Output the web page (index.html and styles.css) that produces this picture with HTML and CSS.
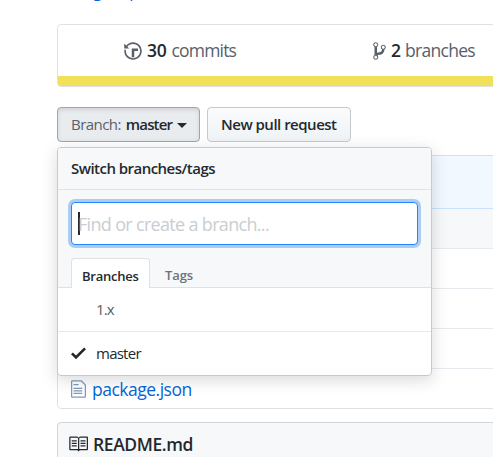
FILE: index.html
```html
<!DOCTYPE html>
<html lang="en">
<head>
<meta charset="utf-8">
<title>Repository</title>
<link rel="stylesheet" href="styles.css">
</head>
<body>
<div class="page">
  <div class="topics"><span>g</span><span>p</span></div>
  <div class="summary">
    <div class="stats">
      <div class="stat commits">
        <svg width="18" height="20" viewBox="0 0 14 16"><path fill-rule="evenodd" d="M8 13H6V6h5v2H8v5zM7 1C4.81 1 2.87 2.02 1.59 3.59L0 2v4h4L2.5 4.5C3.55 3.17 5.17 2.3 7 2.3c3.14 0 5.7 2.56 5.7 5.7s-2.56 5.7-5.7 5.7A5.71 5.71 0 0 1 1.3 8c0-.34.03-.67.09-1H.08C.03 7.33 0 7.66 0 8c0 3.86 3.14 7 7 7s7-3.14 7-7-3.14-7-7-7z"/></svg>
        <b>30</b><span>commits</span>
      </div>
      <div class="stat branches">
        <svg width="13" height="20" viewBox="0 0 10 16"><path fill-rule="evenodd" d="M10 5c0-1.11-.89-2-2-2a1.993 1.993 0 0 0-1 3.72v.3c-.02.52-.23.98-.63 1.38-.4.4-.86.61-1.38.63-.83.02-1.48.16-2 .45V4.72a1.993 1.993 0 0 0-1-3.72C.88 1 0 1.89 0 3a2 2 0 0 0 1 1.72v6.56c-.59.35-1 .99-1 1.72 0 1.11.89 2 2 2 1.11 0 2-.89 2-2 0-.53-.2-1-.53-1.36.09-.06.48-.41.59-.47.25-.11.56-.17.94-.17 1.05-.05 1.95-.45 2.75-1.25S8.95 7.77 9 6.73h-.02C9.59 6.37 10 5.73 10 5zM2 1.8c.66 0 1.2.55 1.2 1.2 0 .65-.55 1.2-1.2 1.2C1.35 4.2.8 3.65.8 3c0-.65.55-1.2 1.2-1.2zm0 12.41c-.66 0-1.2-.55-1.2-1.2 0-.65.55-1.2 1.2-1.2.65 0 1.2.55 1.2 1.2 0 .65-.55 1.2-1.2 1.2zm6-8c-.66 0-1.2-.55-1.2-1.2 0-.65.55-1.2 1.2-1.2.65 0 1.2.55 1.2 1.2 0 .65-.55 1.2-1.2 1.2z"/></svg>
        <b>2</b><span>branches</span>
      </div>
    </div>
    <div class="language"></div>
  </div>
  <div class="toolbar">
    <button class="btn selected"><span class="label">Branch:</span><span class="current">master</span><i class="caret"></i></button>
    <button class="btn pull"><span>New pull request</span></button>
    <div class="menu">
      <div class="menu-head"><span>Switch branches/tags</span></div>
      <div class="filter">
        <div class="field"><i class="cursor"></i><span>Find or create a branch...</span></div>
        <div class="tabs"><div class="tab active"><span>Branches</span></div><div class="tab"><span>Tags</span></div></div>
      </div>
      <div class="item"><span class="check"></span><span class="one">1.x</span></div>
      <div class="item chosen"><span class="check"><svg width="15" height="20" viewBox="0 0 12 16"><path d="M12 5l-8 8-4-4 1.500-1.500L4 10l6.500-6.500L12 5z"/></svg></span><span class="name">master</span></div>
    </div>
  </div>
  <div class="files">
    <div class="latest"></div>
    <div class="row shade"></div>
    <div class="row"></div>
    <div class="row"></div>
    <div class="row"></div>
    <div class="row file">
      <svg width="15" height="20" viewBox="0 0 12 16"><path fill-rule="evenodd" d="M6 5H2V4h4v1zM2 8h7V7H2v1zm0 2h7V9H2v1zm0 2h7v-1H2v1zm10-7.500V14c0 .55-.45 1-1 1H1c-.55 0-1-.45-1-1V2c0-.55.45-1 1-1h7.500L12 4.500zM11 5L8 2H1v12h10V5z"/></svg>
      <span>package.json</span>
    </div>
  </div>
  <div class="readme">
    <svg width="20" height="20" viewBox="0 0 16 16"><path fill-rule="evenodd" d="M3 5h4v1H3V5zm0 3h4V7H3v1zm0 2h4V9H3v1zm11-5h-4v1h4V5zm0 2h-4v1h4V7zm0 2h-4v1h4V9zm2-6v9c0 .55-.45 1-1 1H9.500l-1 1-1-1H2c-.55 0-1-.45-1-1V3c0-.55.45-1 1-1h5.500l1 1 1-1H15c.55 0 1 .45 1 1zm-8 .5L7.500 3H2v9h6V3.500zm7-.5H9.500l-.5.5V12h6V3z"/></svg>
    <span>README.md</span>
  </div>
</div>
</body>
</html>
```
FILE: styles.css
```css
* { box-sizing: border-box; }
html, body { margin: 0; height: 457px; overflow: hidden; background: #fff; }
body { font-family: "Open Sans", "Noto Sans", sans-serif; color: #24292e; }
svg { display: block; flex: none; fill: currentColor; }
span, b { white-space: nowrap; }
.page { width: 493px; height: 457px; padding-left: 57px; overflow: hidden; }

.topics { height: 24px; padding-left: 36px; display: flex; gap: 27px; font-size: 17px; line-height: 22px; color: #0366d6; }
.topics span { margin-top: -20px; height: 22px; }

.summary { width: 700px; height: 63px; border: 1px solid #dfe2e5; border-radius: 4px; overflow: hidden; }
.stats { height: 51px; display: flex; }
.stat { display: flex; align-items: center; font-size: 17.5px; color: #586069; }
.stat b, .stat span { padding-bottom: 2px; }
.stat b { color: #24292e; font-weight: 550; }
.commits { width: 248px; padding-left: 66px; }
.commits b { margin: 0 5px 0 5px; letter-spacing: -.3px; }
.commits span { letter-spacing: -.8px; }
.branches { padding-left: 67px; }
.branches b { margin: 0 4px 0 5px; }
.branches span { letter-spacing: -.7px; }
.language { height: 10px; background: #f1e05a; }

.toolbar { position: relative; display: flex; gap: 7px; margin-top: 20px; height: 48px; }
.btn { display: flex; align-items: center; height: 35px; margin: 0; padding: 0 13px 1px; border: 1px solid #c5c9cd; border-radius: 4px; background: linear-gradient(#fafbfc, #eff3f6); font: 550 15px "Open Sans", sans-serif; color: #24292e; }
.btn.selected { width: 143px; border-color: #a2a6aa; background: #e9ecef; box-shadow: inset 0 2px 4px rgba(27,31,35,.12); }
.btn.pull { width: 144px; letter-spacing: -.5px; }
.label { font-weight: 400; color: #586069; letter-spacing: -.55px; }
.current { margin-left: 5px; letter-spacing: -.85px; }
.caret { margin: 2px 0 0 5px; border: 5px solid transparent; border-top-color: #24292e; border-bottom: 0; }

.menu { position: absolute; left: 0; top: 40px; width: 375px; height: 229px; border: 1px solid #c7cacd; border-radius: 4px; background: #fff; box-shadow: 0 4px 16px rgba(27,31,35,.17); overflow: hidden; z-index: 2; }
.menu-head { height: 42px; padding-left: 13px; border-bottom: 1px solid #e1e4e8; background: #f6f8fa; font-size: 15px; font-weight: 550; line-height: 41px; letter-spacing: -.53px; }
.filter { height: 98px; padding: 12px 13px 0; border-bottom: 1px solid #dfe2e5; background: #f6f8fa; }
.field { height: 43px; display: flex; align-items: center; padding-left: 6px; border: 1px solid #2188ff; border-radius: 4px; background: #fff; box-shadow: 0 0 0 3px #abcdf3; font-size: 18px; color: #c9cdd1; letter-spacing: -.68px; }
.cursor { width: 2px; height: 23px; margin: -1px -2px 0 0; background: #24292e; }
.tabs { display: flex; margin-top: 13px; height: 30px; font-size: 13px; font-weight: 550; line-height: 35px; }
.tab { padding: 0 0 0 15px; color: #6a737d; letter-spacing: -.1px; }
.tab.active { width: 79px; padding: 0 0 0 10px; border: 1px solid #dfe2e5; border-bottom: 0; border-radius: 4px 4px 0 0; background: #fff; color: #24292e; letter-spacing: -.25px; }
.item { height: 44px; display: flex; align-items: center; padding: 0 0 2px 13px; border-bottom: 1px solid #e6e8eb; font-size: 15px; color: #586069; }
.item.chosen { color: #24292e; border: 0; }
.check { width: 25px; }
.one { letter-spacing: -.9px; }
.name { letter-spacing: -.75px; }

.files { width: 700px; border: 1px solid #dfe2e5; border-radius: 4px; }
.latest { height: 53px; background: #f1f8ff; border-bottom: 1px solid #c8e1ff; box-shadow: 0 -1px #c8e1ff; }
.row { height: 40px; border-bottom: 1px solid #e6e9ed; }
.row.shade { background: #f6f8fa; }
.row.file { height: 39px; display: flex; align-items: center; gap: 6px; padding: 2px 0 1px 13px; border: 0; font-size: 17.5px; color: #0366d6; letter-spacing: -.5px; }
.file svg { color: #8099ba; }

.readme { width: 700px; height: 60px; margin-top: 13px; padding: 0 0 16px 10px; display: flex; align-items: center; gap: 5px; border: 1px solid #d1d5da; border-radius: 4px; background: #f6f8fa; font-size: 17.5px; font-weight: 600; letter-spacing: -.4px; }
```
